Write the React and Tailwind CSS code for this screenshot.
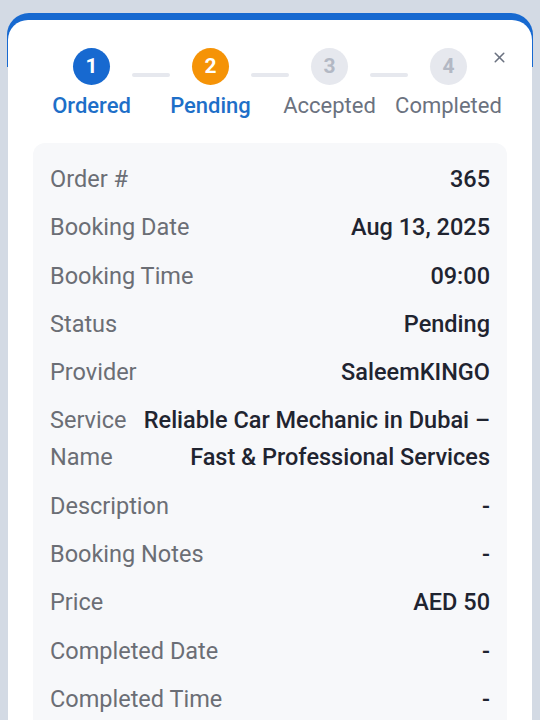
import { X } from "lucide-react";

const steps = [
  { n: 1, label: "Ordered", state: "done" },
  { n: 2, label: "Pending", state: "current" },
  { n: 3, label: "Accepted", state: "todo" },
  { n: 4, label: "Completed", state: "todo" },
];

const rows = [
  ["Order #", "365"],
  ["Booking Date", "Aug 13, 2025"],
  ["Booking Time", "09:00"],
  ["Status", "Pending"],
  ["Provider", "SaleemKINGO"],
  ["Service Name", "Reliable Car Mechanic in Dubai – Fast & Professional Services"],
  ["Description", "-"],
  ["Booking Notes", "-"],
  ["Price", "AED 50"],
  ["Completed Date", "-"],
  ["Completed Time", "-"],
];

function StepCircle({ step }) {
  if (step.state === "done") {
    return (
      <div className="w-[37px] h-[37px] rounded-full bg-[#1769d0] text-white flex items-center justify-center text-[21px] font-bold">
        {step.n}
      </div>
    );
  }
  if (step.state === "current") {
    return (
      <div className="w-[37px] h-[37px] rounded-full bg-[#f59307] text-white flex items-center justify-center text-[21px] font-bold">
        {step.n}
      </div>
    );
  }
  return (
    <div className="w-[37px] h-[37px] rounded-full bg-[#e6e8ee] text-[#b3b8c4] flex items-center justify-center text-[21px] font-bold">
      {step.n}
    </div>
  );
}

export default function App() {
  return (
    <div className="h-[720px] overflow-hidden bg-[#d3dae4] pt-[13px] px-[7px]" style={{ fontFamily: "Roboto, 'Noto Sans', sans-serif" }}>
      <div className="relative pt-[7px]">
        {/* blue header strip behind the sheet */}
        <div className="absolute top-0 left-0 right-0 h-[54px] rounded-t-[22px] bg-[#1769d0]" />

        <div className="relative mx-[1px] bg-white rounded-t-[20px] h-[720px] px-[25px]">
          <button className="absolute top-[29px] right-[24px] text-[#6b7280]">
            <X size={17} strokeWidth={2.2} />
          </button>

          {/* stepper */}
          <div className="pt-[28px] w-[476px] ml-[-1px]">
            <div className="flex items-center px-[41px]">
              {steps.map((s, i) => (
                <div key={s.n} className="flex items-center">
                  <StepCircle step={s} />
                  {i < steps.length - 1 && (
                    <div className="w-[38px] h-[4px] mx-[22px] mt-[16px] rounded-full bg-[#e6e8ee]" />
                  )}
                </div>
              ))}
            </div>
            <div className="grid grid-cols-4 mt-[8px]">
              {steps.map((s) => (
                <div
                  key={s.n}
                  className={
                    s.state === "todo"
                      ? "text-center text-[22px] leading-[26px] text-[#6b7280] whitespace-nowrap"
                      : "text-center text-[22px] leading-[26px] font-medium text-[#1e6fc8] whitespace-nowrap"
                  }
                >
                  {s.label}
                </div>
              ))}
            </div>
          </div>

          {/* details panel */}
          <div className="mt-[24px] bg-[#f7f8fa] rounded-[12px] px-[17px] pt-[18px] pb-4 flex flex-col gap-[11.3px]">
            {rows.map(([label, value]) => (
              <div key={label} className="flex justify-between gap-[12px] text-[23.5px] leading-[37px]">
                <div className="min-w-0 text-[#6b6e75]">{label}</div>
                <div className="shrink-0 max-w-[352px] text-right font-medium text-[#1f2430]">{value}</div>
              </div>
            ))}
          </div>
        </div>
      </div>
    </div>
  );
}
